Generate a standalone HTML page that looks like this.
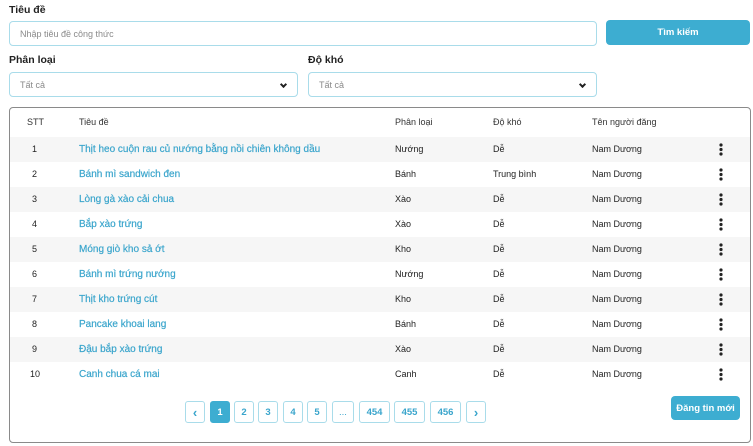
<!DOCTYPE html>
<html><head><meta charset="utf-8"><style>
*{box-sizing:border-box;margin:0;padding:0}
body{width:753px;height:446px;background:#fff;font-family:"Liberation Sans",Arial,sans-serif;font-size:10px;color:#222;position:relative;overflow:hidden}
.abs{position:absolute}
.lbl{font-size:10.5px;font-weight:bold;color:#222}
.inp{border:1px solid #a9dcea;border-radius:4px;background:#fff;color:#8a8a8a;font-size:9px;padding-left:10px;display:flex;align-items:center}
.btn{background:#3dadd1;color:#fff;font-weight:bold;font-size:9.5px;border-radius:4px;display:flex;align-items:center;justify-content:center}
.chev{position:absolute;right:11px;top:9px;width:5px;height:5px;border-right:2px solid #222;border-bottom:2px solid #222;transform:rotate(45deg)}
.box{left:9px;top:107px;width:742px;height:336px;border:1px solid #8a8a8a;border-radius:4px}
.row{position:absolute;left:10px;width:740px;height:25px;font-size:9px}
.row.s{background:#f6f6f6}
.row span{position:absolute;top:7px}
.t{color:#3aa5cc;font-size:10px;-webkit-text-stroke:0.2px #3aa5cc}
.dots{position:absolute;left:709px;top:6px}
.pg{position:absolute;top:401px;height:22px;border:1px solid #a9dcea;border-radius:3px;color:#3aa5cc;font-size:9.5px;display:flex;align-items:center;justify-content:center;font-weight:bold}
.pg.a{background:#3dadd1;border-color:#3dadd1;color:#fff}
</style></head><body>
<div class="abs lbl" style="left:9px;top:4px">Tiêu đề</div>
<div class="abs inp" style="left:9px;top:21px;width:588px;height:25px">Nhập tiêu đề công thức</div>
<div class="abs btn" style="left:606px;top:20px;width:144px;height:25px">Tìm kiếm</div>
<div class="abs lbl" style="left:9px;top:54px">Phân loại</div>
<div class="abs lbl" style="left:308px;top:54px">Độ khó</div>
<div class="abs inp" style="left:9px;top:72px;width:289px;height:25px">Tất cả<div class="chev"></div></div>
<div class="abs inp" style="left:308px;top:72px;width:289px;height:25px">Tất cả<div class="chev"></div></div>
<div class="abs box"></div>
<div class="row" style="top:110px;color:#333;font-size:9px"><span style="left:17px">STT</span><span style="left:69px">Tiêu đề</span><span style="left:385px">Phân loại</span><span style="left:483px">Độ khó</span><span style="left:582px">Tên người đăng</span></div>

<div class="row s" style="top:137px"><span style="left:22px">1</span><span class="t" style="left:69px">Thịt heo cuộn rau củ nướng bằng nồi chiên không dầu</span><span style="left:385px">Nướng</span><span style="left:483px">Dễ</span><span style="left:582px">Nam Dương</span><svg class="dots" width="4" height="13"><circle cx="2" cy="2" r="1.6" fill="#222"/><circle cx="2" cy="6.5" r="1.6" fill="#222"/><circle cx="2" cy="11" r="1.6" fill="#222"/></svg></div>
<div class="row" style="top:162px"><span style="left:22px">2</span><span class="t" style="left:69px">Bánh mì sandwich đen</span><span style="left:385px">Bánh</span><span style="left:483px">Trung bình</span><span style="left:582px">Nam Dương</span><svg class="dots" width="4" height="13"><circle cx="2" cy="2" r="1.6" fill="#222"/><circle cx="2" cy="6.5" r="1.6" fill="#222"/><circle cx="2" cy="11" r="1.6" fill="#222"/></svg></div>
<div class="row s" style="top:187px"><span style="left:22px">3</span><span class="t" style="left:69px">Lòng gà xào cải chua</span><span style="left:385px">Xào</span><span style="left:483px">Dễ</span><span style="left:582px">Nam Dương</span><svg class="dots" width="4" height="13"><circle cx="2" cy="2" r="1.6" fill="#222"/><circle cx="2" cy="6.5" r="1.6" fill="#222"/><circle cx="2" cy="11" r="1.6" fill="#222"/></svg></div>
<div class="row" style="top:212px"><span style="left:22px">4</span><span class="t" style="left:69px">Bắp xào trứng</span><span style="left:385px">Xào</span><span style="left:483px">Dễ</span><span style="left:582px">Nam Dương</span><svg class="dots" width="4" height="13"><circle cx="2" cy="2" r="1.6" fill="#222"/><circle cx="2" cy="6.5" r="1.6" fill="#222"/><circle cx="2" cy="11" r="1.6" fill="#222"/></svg></div>
<div class="row s" style="top:237px"><span style="left:22px">5</span><span class="t" style="left:69px">Móng giò kho sả ớt</span><span style="left:385px">Kho</span><span style="left:483px">Dễ</span><span style="left:582px">Nam Dương</span><svg class="dots" width="4" height="13"><circle cx="2" cy="2" r="1.6" fill="#222"/><circle cx="2" cy="6.5" r="1.6" fill="#222"/><circle cx="2" cy="11" r="1.6" fill="#222"/></svg></div>
<div class="row" style="top:262px"><span style="left:22px">6</span><span class="t" style="left:69px">Bánh mì trứng nướng</span><span style="left:385px">Nướng</span><span style="left:483px">Dễ</span><span style="left:582px">Nam Dương</span><svg class="dots" width="4" height="13"><circle cx="2" cy="2" r="1.6" fill="#222"/><circle cx="2" cy="6.5" r="1.6" fill="#222"/><circle cx="2" cy="11" r="1.6" fill="#222"/></svg></div>
<div class="row s" style="top:287px"><span style="left:22px">7</span><span class="t" style="left:69px">Thịt kho trứng cút</span><span style="left:385px">Kho</span><span style="left:483px">Dễ</span><span style="left:582px">Nam Dương</span><svg class="dots" width="4" height="13"><circle cx="2" cy="2" r="1.6" fill="#222"/><circle cx="2" cy="6.5" r="1.6" fill="#222"/><circle cx="2" cy="11" r="1.6" fill="#222"/></svg></div>
<div class="row" style="top:312px"><span style="left:22px">8</span><span class="t" style="left:69px">Pancake khoai lang</span><span style="left:385px">Bánh</span><span style="left:483px">Dễ</span><span style="left:582px">Nam Dương</span><svg class="dots" width="4" height="13"><circle cx="2" cy="2" r="1.6" fill="#222"/><circle cx="2" cy="6.5" r="1.6" fill="#222"/><circle cx="2" cy="11" r="1.6" fill="#222"/></svg></div>
<div class="row s" style="top:337px"><span style="left:22px">9</span><span class="t" style="left:69px">Đậu bắp xào trứng</span><span style="left:385px">Xào</span><span style="left:483px">Dễ</span><span style="left:582px">Nam Dương</span><svg class="dots" width="4" height="13"><circle cx="2" cy="2" r="1.6" fill="#222"/><circle cx="2" cy="6.5" r="1.6" fill="#222"/><circle cx="2" cy="11" r="1.6" fill="#222"/></svg></div>
<div class="row" style="top:362px"><span style="left:20px">10</span><span class="t" style="left:69px">Canh chua cá mai</span><span style="left:385px">Canh</span><span style="left:483px">Dễ</span><span style="left:582px">Nam Dương</span><svg class="dots" width="4" height="13"><circle cx="2" cy="2" r="1.6" fill="#222"/><circle cx="2" cy="6.5" r="1.6" fill="#222"/><circle cx="2" cy="11" r="1.6" fill="#222"/></svg></div>

<div class="pg" style="left:185px;width:20px;font-size:13px">‹</div>
<div class="pg a" style="left:210px;width:20px">1</div>
<div class="pg" style="left:234px;width:20px">2</div>
<div class="pg" style="left:258px;width:20px">3</div>
<div class="pg" style="left:283px;width:20px">4</div>
<div class="pg" style="left:307px;width:20px">5</div>
<div class="pg" style="left:332px;width:22px;font-weight:normal">...</div>
<div class="pg" style="left:359px;width:31px">454</div>
<div class="pg" style="left:394px;width:31px">455</div>
<div class="pg" style="left:430px;width:31px">456</div>
<div class="pg" style="left:466px;width:20px;font-size:13px">›</div>
<div class="abs btn" style="left:671px;top:396px;width:69px;height:24px">Đăng tin mới</div>
</body></html>
